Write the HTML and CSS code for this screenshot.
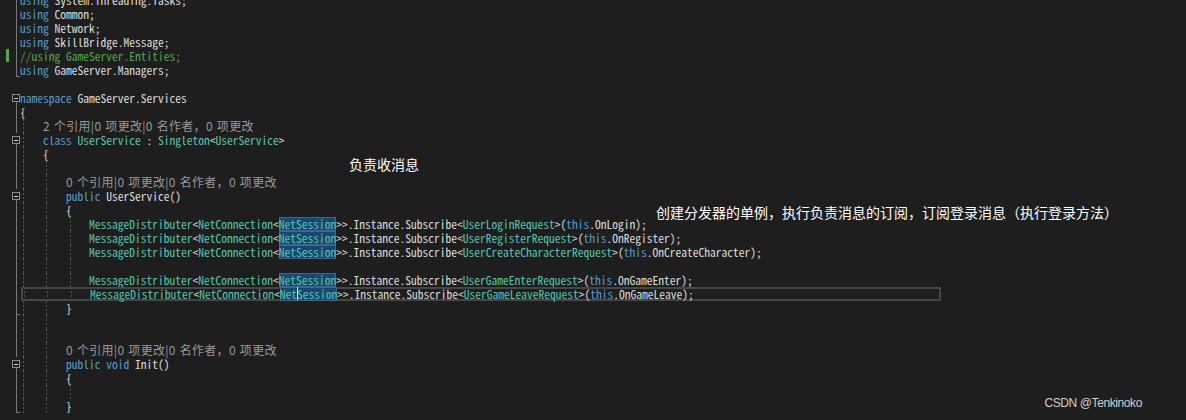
FILE: index.html
```html
<!DOCTYPE html>
<html lang="zh-CN">
<head>
    <meta charset="UTF-8">
    <meta name="viewport" content="width=device-width, initial-scale=1.0">
    <title>UserService.cs</title>
    <link rel="stylesheet" href="styles.css">
</head>
<body>
    <div class="editor">
        <!-- using block -->
        <div class="ln"><span class="gut bar"></span><span class="code"><span class="kw">using</span> System.Threading.Tasks;</span></div>
        <div class="ln"><span class="gut bar"></span><span class="code"><span class="kw">using</span> Common;</span></div>
        <div class="ln"><span class="gut bar"></span><span class="code"><span class="kw">using</span> Network;</span></div>
        <div class="ln"><span class="gut bar"></span><span class="code"><span class="kw">using</span> SkillBridge.Message;</span></div>
        <div class="ln"><span class="gut bar chg"></span><span class="code"><span class="cm">//using GameServer.Entities;</span></span></div>
        <div class="ln"><span class="gut end"></span><span class="code"><span class="kw">using</span> GameServer.Managers;</span></div>
        <div class="ln"><span class="gut"></span><span class="code"></span></div>

        <!-- namespace -->
        <div class="ln"><span class="gut open"><span class="fold"></span></span><span class="code"><span class="kw">namespace</span> GameServer.Services</span></div>
        <div class="ln"><span class="gut bar"></span><span class="code">{</span></div>
        <div class="ln"><span class="gut bar"></span><span class="code g1">    <span class="lens">2 个引用|0 项更改|0 名作者，0 项更改</span></span></div>
        <div class="ln"><span class="gut open"><span class="fold"></span></span><span class="code g1">    <span class="kw">class</span> <span class="ty">UserService</span> : <span class="ty">Singleton</span>&lt;<span class="ty">UserService</span>&gt;</span></div>
        <div class="ln"><span class="gut bar"></span><span class="code g1">    {</span></div>
        <div class="ln"><span class="gut bar"></span><span class="code g2"></span></div>

        <!-- constructor -->
        <div class="ln"><span class="gut bar"></span><span class="code g2">        <span class="lens">0 个引用|0 项更改|0 名作者，0 项更改</span></span></div>
        <div class="ln"><span class="gut open"><span class="fold"></span></span><span class="code g2">        <span class="kw">public</span> UserService()</span></div>
        <div class="ln"><span class="gut bar"></span><span class="code g2">        {</span></div>
        <div class="ln"><span class="gut bar"></span><span class="code g3">            <span class="ty">MessageDistributer</span>&lt;<span class="ty">NetConnection</span>&lt;<span class="ty hl">NetSession</span>&gt;&gt;.Instance.Subscribe&lt;<span class="ty">UserLoginRequest</span>&gt;(<span class="kw">this</span>.OnLogin);</span></div>
        <div class="ln"><span class="gut bar"></span><span class="code g3">            <span class="ty">MessageDistributer</span>&lt;<span class="ty">NetConnection</span>&lt;<span class="ty hl">NetSession</span>&gt;&gt;.Instance.Subscribe&lt;<span class="ty">UserRegisterRequest</span>&gt;(<span class="kw">this</span>.OnRegister);</span></div>
        <div class="ln"><span class="gut bar"></span><span class="code g3">            <span class="ty">MessageDistributer</span>&lt;<span class="ty">NetConnection</span>&lt;<span class="ty hl">NetSession</span>&gt;&gt;.Instance.Subscribe&lt;<span class="ty">UserCreateCharacterRequest</span>&gt;(<span class="kw">this</span>.OnCreateCharacter);</span></div>
        <div class="ln"><span class="gut bar"></span><span class="code g3"></span></div>
        <div class="ln"><span class="gut bar"></span><span class="code g3">            <span class="ty">MessageDistributer</span>&lt;<span class="ty">NetConnection</span>&lt;<span class="ty hl">NetSession</span>&gt;&gt;.Instance.Subscribe&lt;<span class="ty">UserGameEnterRequest</span>&gt;(<span class="kw">this</span>.OnGameEnter);</span></div>
        <div class="ln"><span class="gut bar"></span><span class="code g3 current">            <span class="ty">MessageDistributer</span>&lt;<span class="ty">NetConnection</span>&lt;<span class="ty hl">Net<span class="caret"></span>Session</span>&gt;&gt;.Instance.Subscribe&lt;<span class="ty">UserGameLeaveRequest</span>&gt;(<span class="kw">this</span>.OnGameLeave);</span></div>
        <div class="ln"><span class="gut end"></span><span class="code g2">        }</span></div>
        <div class="ln"><span class="gut bar"></span><span class="code g2"></span></div>
        <div class="ln"><span class="gut bar"></span><span class="code g2"></span></div>

        <!-- Init -->
        <div class="ln"><span class="gut bar"></span><span class="code g2">        <span class="lens">0 个引用|0 项更改|0 名作者，0 项更改</span></span></div>
        <div class="ln"><span class="gut open"><span class="fold"></span></span><span class="code g2">        <span class="kw">public</span> <span class="kw">void</span> Init()</span></div>
        <div class="ln"><span class="gut bar"></span><span class="code g2">        {</span></div>
        <div class="ln"><span class="gut bar"></span><span class="code g3"></span></div>
        <div class="ln"><span class="gut end"></span><span class="code g2">        }</span></div>

        <!-- notes written over the screenshot -->
        <div class="note note-recv">负责收消息</div>
        <div class="note note-sub">创建分发器的单例，执行负责消息的订阅，订阅登录消息（执行登录方法）</div>
    </div>

    <div class="watermark">CSDN @Tenkinoko</div>
</body>
</html>
```

FILE: styles.css
```css
/* Global Styling */
body {
    margin: 0;
    padding: 0;
    height: 420px;
    overflow: hidden;
    background-color: #1e1e1e; /* VS dark editor */
    color: #dcdcdc;
}

.editor {
    position: relative;
    margin-top: -7px;
}

.ln {
    display: flex;
    height: 14px;
}

/* Left margin: outline bars and fold boxes */
.gut {
    flex: 0 0 20px;
    display: flex;
    align-items: center;
    height: 14px;
    background-repeat: no-repeat;
}

.gut.bar {
    background-image: linear-gradient(#7a7a7a, #7a7a7a);
    background-position: 16px 0;
    background-size: 1px 100%;
}

.gut.end {
    background-image: linear-gradient(#7a7a7a, #7a7a7a), linear-gradient(#7a7a7a, #7a7a7a);
    background-position: 16px 0, 16px 13px;
    background-size: 1px 14px, 4px 1px;
}

.gut.open {
    background-image: linear-gradient(#7a7a7a, #7a7a7a);
    background-position: 16px 11px;
    background-size: 1px 3px;
}

.gut.chg {
    background-image: linear-gradient(#57a64a, #57a64a), linear-gradient(#7a7a7a, #7a7a7a);
    background-position: 6px 0, 16px 0;
    background-size: 3px 13px, 1px 100%;
}

.fold {
    box-sizing: border-box;
    width: 8px;
    height: 8px;
    margin-left: 12px;
    border: 1px solid #8c8c8c;
    background: linear-gradient(#c8c8c8, #c8c8c8) center / 4px 1px no-repeat;
}

/* Code text */
.code {
    flex: 1;
    height: 14px;
    line-height: 14px;
    white-space: pre;
    font-family: "Noto Sans Mono CJK SC", "Liberation Mono", monospace;
    font-size: 11.5px;
    background-repeat: no-repeat;
}

/* dotted indent guides */
.g1 {
    background-image: repeating-linear-gradient(#555 0 2px, transparent 2px 4px);
    background-position: 3px 0;
    background-size: 1px 14px;
}

.g2 {
    background-image: repeating-linear-gradient(#555 0 2px, transparent 2px 4px),
                      repeating-linear-gradient(#555 0 2px, transparent 2px 4px);
    background-position: 3px 0, 26px 0;
    background-size: 1px 14px, 1px 14px;
}

.g3 {
    background-image: repeating-linear-gradient(#555 0 2px, transparent 2px 4px),
                      repeating-linear-gradient(#555 0 2px, transparent 2px 4px),
                      repeating-linear-gradient(#555 0 2px, transparent 2px 4px);
    background-position: 3px 0, 26px 0, 50px 0;
    background-size: 1px 14px, 1px 14px, 1px 14px;
}

.current {
    flex: 0 0 920px;
    margin-left: 1px;
    margin-right: auto;
    box-shadow: inset 0 0 0 2px #464646;
}

.kw { color: #569cd6; }
.ty { color: #4ec9b0; }
.cm { color: #57a64a; }

.lens {
    font-family: "Noto Sans CJK SC", "Noto Sans", sans-serif;
    font-size: 12px;
    color: #999999;
    letter-spacing: 0.3px;
    word-spacing: 1px;
}

.hl {
    display: inline-block;
    height: 14px;
    vertical-align: top;
    background-color: #1a4770;
    box-shadow: inset 0 0 0 1px #3f6890;
}

.caret {
    display: inline-block;
    width: 0;
    height: 13px;
    vertical-align: top;
    border-left: 1px solid #dcdcdc;
    margin-right: -1px;
}

/* Annotations added on top of the screenshot */
.note {
    position: absolute;
    font-family: "Noto Sans CJK SC", sans-serif;
    font-size: 14px;
    line-height: 20px;
    color: #ffffff;
    white-space: nowrap;
}

.note-recv {
    left: 349px;
    top: 161px;
}

.note-sub {
    left: 656px;
    top: 209px;
}

.watermark {
    position: absolute;
    right: 44px;
    top: 394px;
    font-family: "Liberation Sans", Arial, sans-serif;
    font-size: 12px;
    letter-spacing: -0.4px;
    line-height: 18px;
    color: #cfcfcf;
}
```
